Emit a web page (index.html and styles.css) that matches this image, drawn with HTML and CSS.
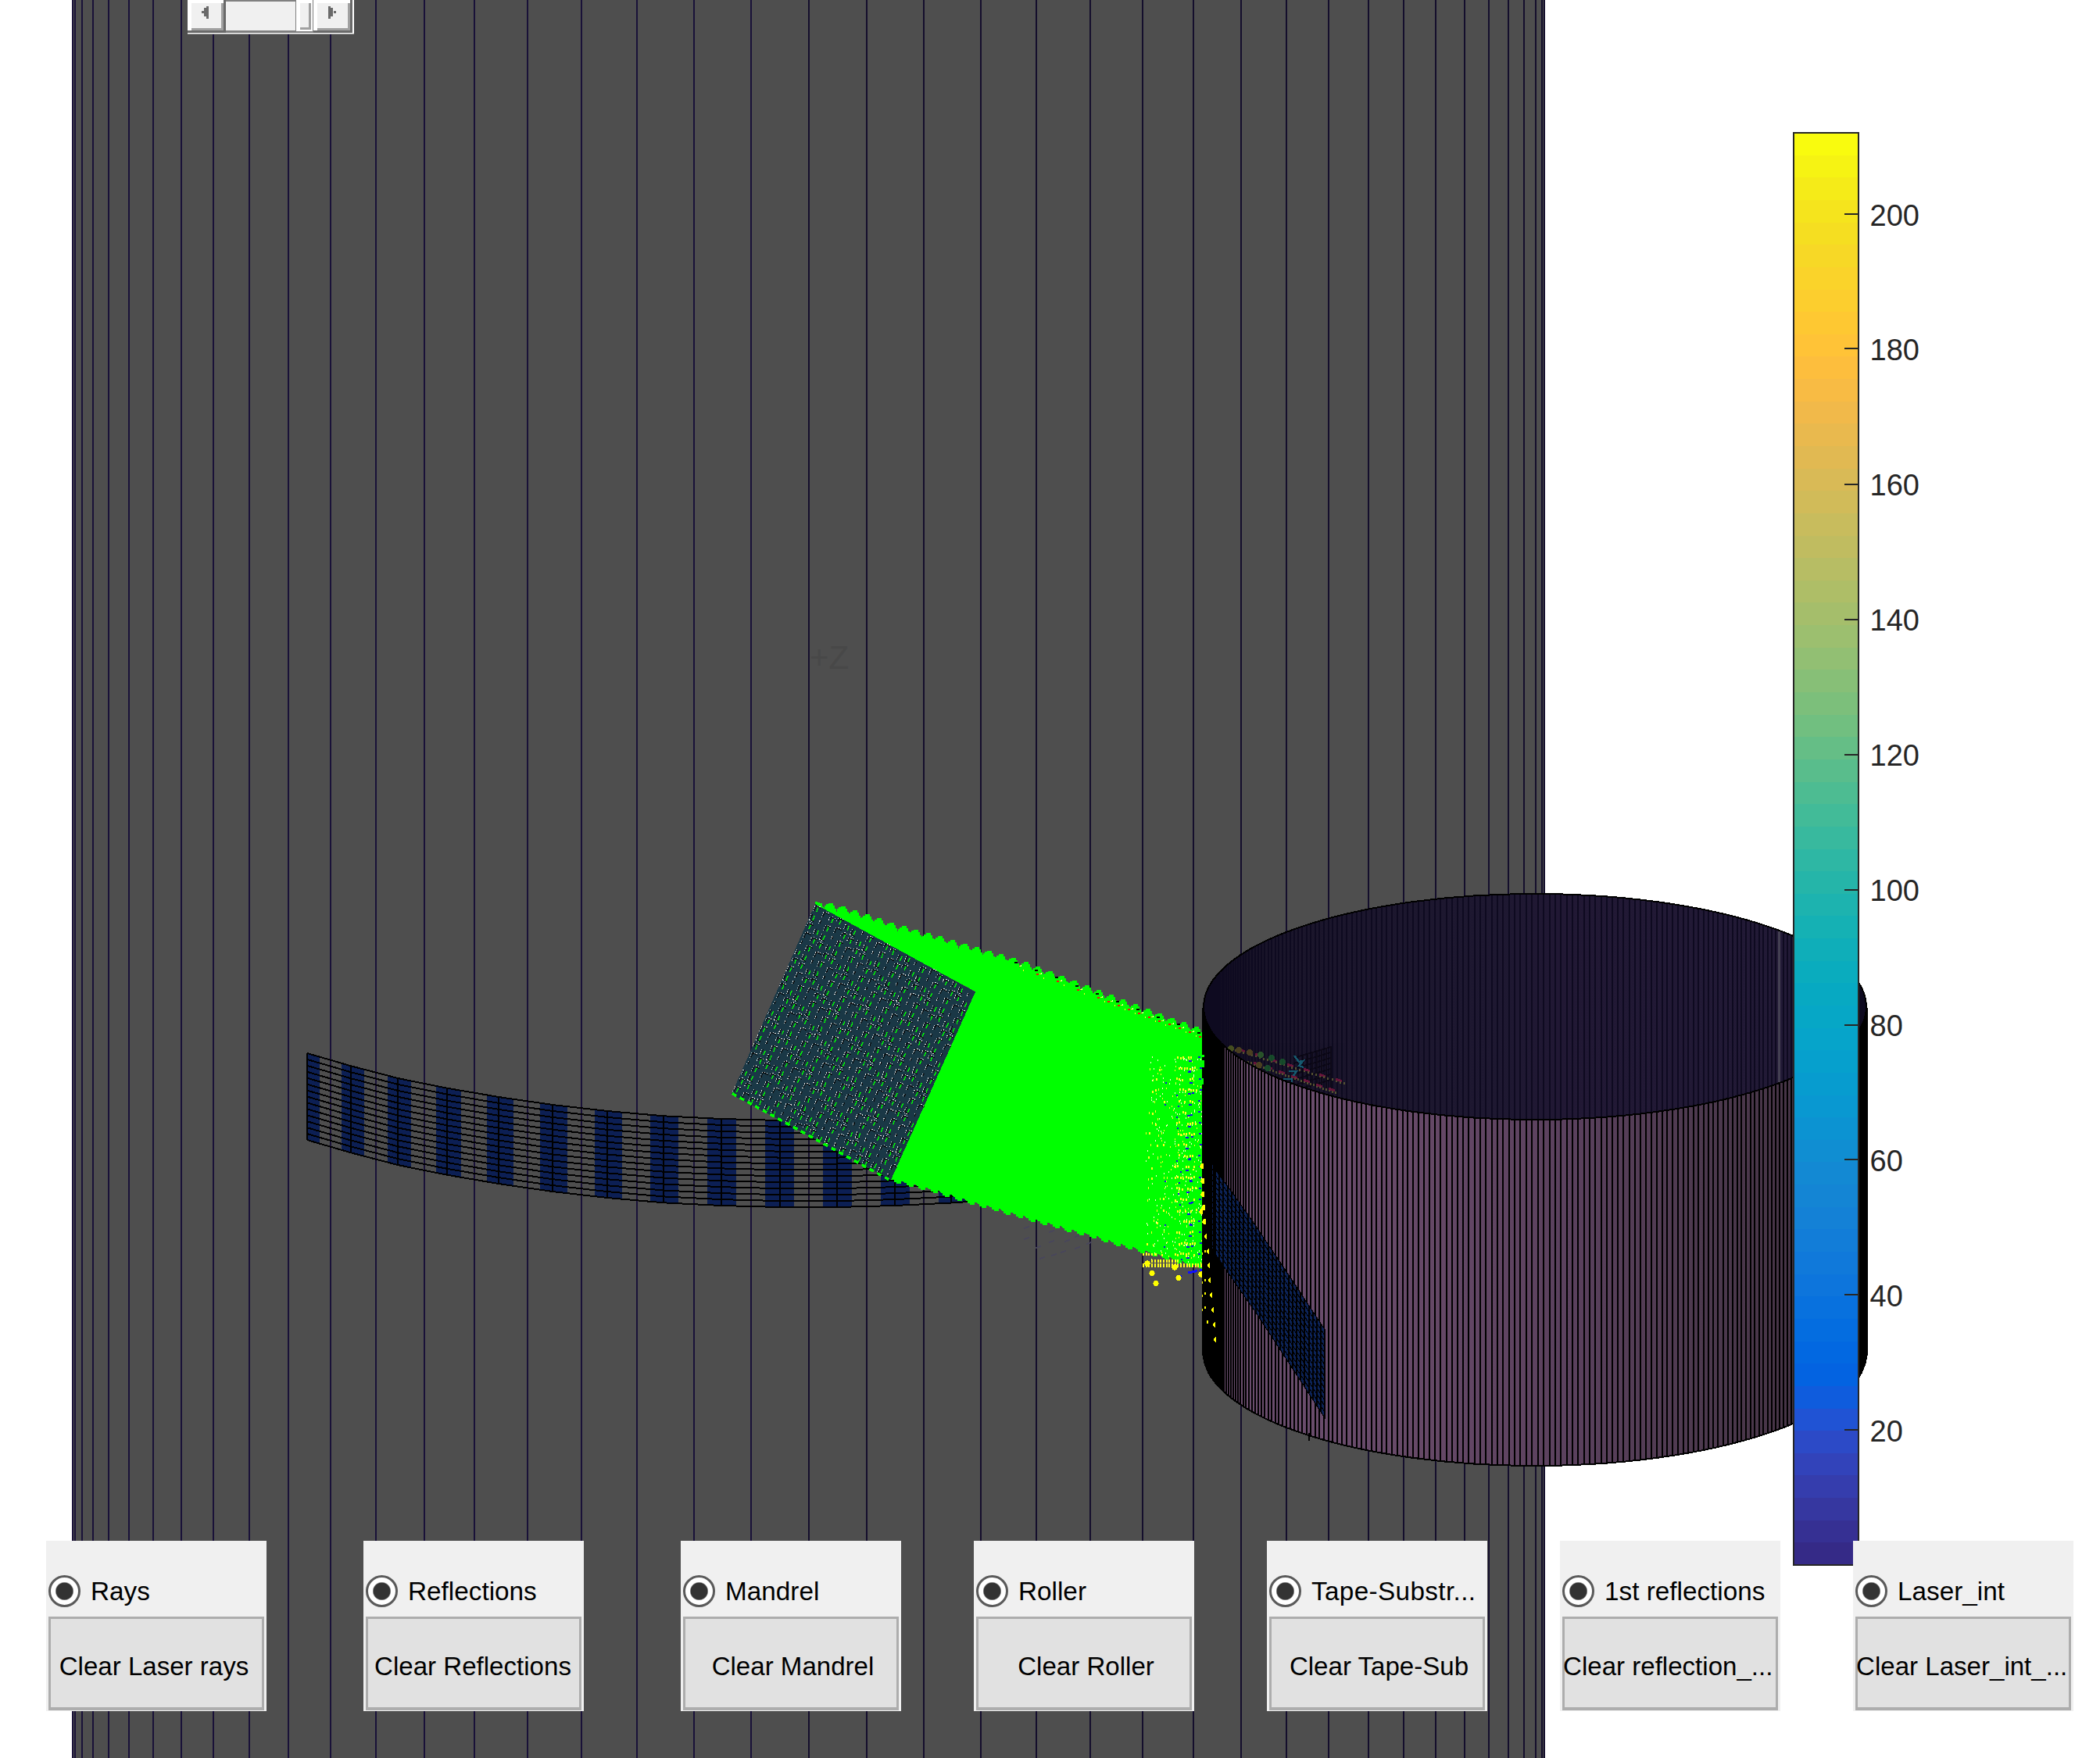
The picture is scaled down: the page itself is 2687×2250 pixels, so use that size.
FILE: index.html
```html
<!DOCTYPE html>
<html lang="en">
<head>
<meta charset="utf-8">
<title>Laser optics</title>
<link rel="stylesheet" href="styles.css">
</head>
<body>
<main class="figure">
  <svg class="scene" width="2687" height="2250" viewBox="0 0 2687 2250" shape-rendering="crispEdges">
    <defs>
      <linearGradient id="shell" gradientUnits="userSpaceOnUse" x1="1563" y1="0" x2="2295" y2="0">
        <stop offset="0" stop-color="#6b4e6e"/><stop offset="0.3" stop-color="#684a69"/>
        <stop offset="0.6" stop-color="#5b415e"/><stop offset="0.85" stop-color="#4d394e"/>
        <stop offset="1" stop-color="#463446"/>
      </linearGradient>
      <linearGradient id="bore" gradientUnits="userSpaceOnUse" x1="1539" y1="0" x2="2295" y2="0">
        <stop offset="0" stop-color="#100c20"/><stop offset="0.12" stop-color="#1a152a"/>
        <stop offset="0.5" stop-color="#1e1831"/><stop offset="0.6" stop-color="#211834"/>
        <stop offset="1" stop-color="#221a36"/>
      </linearGradient>
      <clipPath id="boreClip"><ellipse cx="1964" cy="1288.5" rx="424.7" ry="144.5"/></clipPath>
    </defs>
    <rect class="mandrel" x="92" y="0" width="1885" height="2250"/>
    <g id="mandrelLines"></g>
    <text class="axis-mark" x="1036" y="856">+Z</text>
    <g id="substrate"></g>
    <g id="rays"></g>
    <g id="source"></g>
    <g id="hits"></g>
    <path d="M1539.3 1288.5V1731.5A424.7 144.5 0 0 0 2388.7 1731.5V1288.5Z" fill="url(#shell)"/>
    <g id="shellLines"></g>
    <path d="M1540 1731.5A424 144.5 0 0 0 2388 1731.5" class="rim"/>
    <ellipse cx="1964" cy="1288.5" rx="424" ry="144.5" fill="url(#bore)"/>
    <g id="boreLines" clip-path="url(#boreClip)"></g>
    <g id="ghost" clip-path="url(#boreClip)" opacity="0.6"></g>
    <ellipse cx="1964" cy="1288.5" rx="424" ry="144.5" class="rim"/>
    <path d="M1675 1834V1844" class="rim"/>
    <g id="tape"></g>
    <g id="rollerHits"></g>
    <g id="colorbar"></g>
    <g class="colorbar-frame">
      <path d="M2295 170h83v1833h-83z"/>
      <path d="M2360 274h18M2360 446h18M2360 620h18M2360 793h18M2360 966h18M2360 1139h18M2360 1312h18M2360 1484h18M2360 1657h18M2360 1830h18"/>
    </g>
    <g class="ticks">
      <text x="2392.500" y="288.600">200</text><text x="2392.500" y="460.600">180</text>
      <text x="2392.500" y="633.600">160</text><text x="2392.500" y="806.600">140</text>
      <text x="2392.500" y="979.600">120</text><text x="2392.500" y="1152.600">100</text>
      <text x="2392.500" y="1325.600">80</text><text x="2392.500" y="1498.600">60</text>
      <text x="2392.500" y="1671.600">40</text><text x="2392.500" y="1844.600">20</text>
    </g>
  </svg>

  <div class="slider">
    <div class="step"><svg width="9" height="16" viewBox="0 0 9 16"><path d="M6 0h3v16H6zM3 2h3v11H3zM0 6h3v3H0z"/></svg></div>
    <div class="track"><div class="thumb"></div></div>
    <div class="step step-next"><svg width="12" height="16" viewBox="0 0 12 16"><path d="M0 0h3v16H0zM3 2h3v11H3zM7 6h3v3H7z"/></svg></div>
  </div>

  <div class="controls">
    <section class="panel"><label class="option"><span class="radio"></span>Rays</label><button class="clear nudge-l">Clear Laser rays</button></section>
    <section class="panel"><label class="option"><span class="radio"></span>Reflections</label><button class="clear nudge-s">Clear Reflections</button></section>
    <section class="panel"><label class="option"><span class="radio"></span>Mandrel</label><button class="clear nudge-r">Clear Mandrel</button></section>
    <section class="panel"><label class="option"><span class="radio"></span>Roller</label><button class="clear nudge-r">Clear Roller</button></section>
    <section class="panel"><label class="option"><span class="radio"></span><span class="wide">Tape-Substr...</span></label><button class="clear nudge-r">Clear Tape-Sub</button></section>
    <section class="panel"><label class="option"><span class="radio"></span>1st reflections</label><button class="clear start">Clear reflection_...</button></section>
    <section class="panel"><label class="option"><span class="radio"></span>Laser_int</label><button class="clear start">Clear Laser_int_...</button></section>
  </div>
</main>
<script src="scene.js"></script>
</body>
</html>
```

FILE: styles.css
```css
* { box-sizing: border-box; }
body {
  margin: 0;
  background: #fff;
  font-family: "Liberation Sans", Arial, sans-serif;
}
.figure {
  display: grid;
  width: 2687px;
  height: 2250px;
  overflow: hidden;
}
.scene, .slider, .controls { grid-area: 1 / 1; }
.scene { display: block; }
.mandrel { fill: #4e4e4e; }
.rim { fill: none; stroke: #000; stroke-width: 2; }
.axis-mark { font-size: 42px; fill: #484848; }
.colorbar-frame path { fill: none; stroke: #262626; stroke-width: 2; }
.ticks text { font-size: 38px; fill: #262626; }

/* horizontal slider */
.slider {
  z-index: 1;
  display: flex;
  width: 213px;
  height: 44px;
  margin-left: 240px;
  background: #696969;
  border-bottom: 1px solid #a0a0a0;
  box-shadow: inset -2px -1px 0 #fff;
}
.step {
  width: 49px;
  height: 42px;
  background: #f0f0f0;
  border: solid #696969;
  border-width: 0 3px 3px 0;
  box-shadow: inset 5px 4px 0 #fff, inset -3px -3px 0 #a0a0a0;
  padding: 8px 0 0 18px;
}
.step svg { display: block; fill: #6a6a6a; shape-rendering: crispEdges; }
.track {
  width: 112px;
  height: 42px;
  background: #f0f0f0;
  border: solid #808080;
  border-width: 2px 0 3px;
  display: flex;
  justify-content: flex-end;
}
.thumb {
  width: 23px;
  height: 41px;
  margin-top: -2px;
  background: #f0f0f0;
  border: 1px solid #808080;
  border-width: 0 1px 1px;
  box-shadow: inset 5px 4px 0 #fff, inset -2px -2px 0 #fff, inset -5px -5px 0 #a0a0a0;
}
.step-next { width: 50px; padding-left: 19px; }

/* bottom row of toggles */
.controls {
  z-index: 1;
  display: grid;
  grid-template-columns: 406px 406px 375px 375px 375px 375px 282px;
  align-self: start;
  margin: 1972px 0 0 59px;
}
.panel {
  width: 282px;
  height: 218px;
  padding: 44px 3px 0;
  background: #f0f0f0;
}
.option {
  display: flex;
  align-items: center;
  gap: 13px;
  height: 41px;
  margin-bottom: 12px;
  font-size: 33.3px;
  line-height: 47px;
  color: #000;
  white-space: nowrap;
}
.wide { letter-spacing: 0.35px; }
.radio {
  width: 41px;
  height: 41px;
  border: 3px solid #5a5a5a;
  border-radius: 50%;
  background: radial-gradient(circle, #333 0 10.500px, #fff 12px);
}
.clear {
  display: block;
  width: 276px;
  height: 120px;
  padding: 9px 0 0;
  border: solid #adadad;
  border-width: 3px 3px 4px;
  border-radius: 0;
  background: #e1e1e1;
  font: 33.1px "Liberation Sans", Arial, sans-serif;
  color: #000;
  white-space: nowrap;
}
.nudge-l { padding-right: 6px; }
.nudge-s { padding-right: 2px; }
.nudge-r { padding-left: 5px; }
.start { text-align: left; text-indent: -2px; }
```

FILE: scene.js
```js
const NS = 'http://www.w3.org/2000/svg';
const layer = id => document.getElementById(id);
function add(id, tag, attrs) {
  const el = document.createElementNS(NS, tag);
  for (const k in attrs) el.setAttribute(k, attrs[k]);
  layer(id).appendChild(el);
}
const stroke = (id, d, color, width = 2, extra = {}) =>
  add(id, 'path', { d, fill: 'none', stroke: color, 'stroke-width': width, ...extra });
const fill = (id, d, color) => add(id, 'path', { d, fill: color });
const box = (x, y, w, h) => `M${x} ${y}h${w}v${h}h${-w}z`;
let seed = 7;
const rnd = () => (seed = (seed * 16807) % 2147483647) / 2147483647;
function interp(pts, x) {
  for (let i = 1; i < pts.length; i++) {
    if (x <= pts[i][0]) {
      const [x0, y0] = pts[i - 1], [x1, y1] = pts[i];
      return y0 + (y1 - y0) * (x - x0) / (x1 - x0);
    }
  }
  return pts[pts.length - 1][1];
}

/* mandrel generator lines */
const xs = [93, 96, 105, 119, 139, 165, 196, 232, 273, 319, 369, 423, 481, 543, 607, 675, 744, 815, 888,
  961, 1035, 1109, 1182, 1255, 1326, 1395, 1462, 1527, 1588, 1646, 1700, 1751, 1796, 1837, 1874, 1905,
  1930, 1950, 1965, 1973, 1976];
stroke('mandrelLines', xs.filter(x => x < 1000).map(x => `M${x} 0V2250`).join(''), '#191138');
stroke('mandrelLines', xs.filter(x => x > 1000).map(x => `M${x} 0V2250`).join(''), '#140e2c');

/* substrate tape */
const top0 = [[393, 1348], [449, 1364.3], [509, 1380], [572, 1392.7], [638, 1404], [707, 1414], [777, 1422],
  [849, 1428.3], [923, 1432], [998, 1434], [1071, 1434], [1145, 1432], [1217, 1428.5], [1240, 1427]];
const bands = [[393, 409], [437, 466], [496, 526], [558, 590], [623, 657], [691, 726], [761, 796], [832, 868],
  [905, 942], [979, 1016], [1053, 1090], [1127, 1164], [1201, 1238]];
for (const [a, b] of bands) {
  const m = (a + b) / 2;
  fill('substrate', `M${a} ${interp(top0, a)}L${m} ${interp(top0, m)}L${b} ${interp(top0, b)}V${interp(top0, b) + 111}L${m} ${interp(top0, m) + 111}L${a} ${interp(top0, a) + 111}Z`, '#0c1f54');
}
let tapeLines = '';
for (let j = 0; j <= 14; j++)
  tapeLines += 'M' + top0.map(([x, y]) => `${x} ${(y + j * 7.93).toFixed(1)}`).join('L');
for (const [x, y] of top0.slice(0, -1)) tapeLines += `M${x} ${y}v111`;
stroke('substrate', tapeLines, '#000');

/* faint shadow dashes below the beam */
for (const [x, y] of [[1310, 1572], [1310, 1586], [1325, 1597], [1342, 1590], [1342, 1577], [1357, 1603], [1330, 1611], [1375, 1583], [1375, 1598], [1345, 1607], [1390, 1592], [1362, 1589]])
  stroke('rays', `M${x} ${y}l7 -2`, '#48465a', 2);

/* incoming beam */
const beamTop = [[1043, 1158], [1063, 1163], [1136, 1187], [1199, 1205], [1260, 1223], [1292, 1232], [1351, 1254], [1399, 1273],
  [1464, 1298], [1524, 1320], [1538, 1327]];
const beamBottom = [[1140, 1509], [1182, 1520], [1230, 1535], [1269, 1546], [1325, 1562], [1390, 1580], [1433, 1593],
  [1481, 1606], [1520, 1618], [1538, 1621]];
let beam = 'M1043 1159V1154h3v1h3v1h3v3';
for (let x = 1055; x < 1532; x += 15.6) {
  const y = interp(beamTop, x);
  beam += `L${x} ${y + 2}V${y - 2}h2v-2h3v-1.500h6v3h2v4h2`;
}
beam += 'L1538 1327V1622';
const teeth = [];
for (let x = 1142; x < 1534; x += 15.6) teeth.push(x);
for (const x of teeth.reverse()) {
  const y = interp(beamBottom, x);
  beam += `L${x + 13} ${y + 2}h-2v3h-6v-2h-3v-3h-2`;
}
beam += 'L1140 1510L1248 1269Z';
fill('rays', beam, '#0f0');

/* ray source grid */
fill('source', 'M1043 1157L1248 1269.500L1140 1510L936 1400.500Z', '#1a3846');
let green = '', black = '', white = '';
const U = [205 / 21, 112.5 / 21], V = [-107.2 / 22, 242 / 22];
const at = (u, v) => [1043 + u * U[0] + v * V[0], 1157 + u * U[1] + v * V[1]];
const seg = (u0, v0, u1, v1, dx = 0) => {
  const a = at(u0, v0), b = at(u1, v1);
  return `M${(a[0] + dx).toFixed(1)} ${a[1].toFixed(1)}L${(b[0] + dx).toFixed(1)} ${b[1].toFixed(1)}`;
};
for (let i = 0; i < 21; i++) {
  for (let j = 0; j < 22; j++) {
    const phase = (i * 2 + j * 3) % 7;
    const u = i + (phase % 3) * 0.1, v = j + (i % 3) * 0.15;
    if (v > 21.3) continue;
    if (phase !== 2 && phase !== 5) green += seg(u + 0.5, v + 0.15, u + 0.5, v + 0.65);
    const len = phase < 4 ? 0.6 : 0.35;
    black += seg(u + 0.2, v + 0.1, u + 0.2, v + 0.1 + len);
    white += seg(u + 0.2, v + 0.1, u + 0.2, v + 0.1 + len, -1.5);
    if (phase % 2 === 0) {
      black += seg(u + 0.2, v + 0.12, u + 0.8, v + 0.12);
      white += seg(u + 0.3, v + 0.02, u + 0.8, v + 0.02);
    } else if (phase === 3) {
      black += seg(u + 0.1, v + 0.7, u + 0.7, v + 0.7);
      white += seg(u + 0.1, v + 0.8, u + 0.6, v + 0.8);
    }
  }
}
stroke('source', green, '#0f0', 1.3);
stroke('source', black, '#0a0a0a', 1);
stroke('source', white, '#e4e4e4', 1, { 'stroke-dasharray': '1.4 1.6' });
let lower = '';
for (let i = 0; i < 21; i++) lower += seg(i + 0.1, 22, i + 0.65, 22);
stroke('source', lower, '#0f0', 3.5);

/* intersection markers inside the beam */
let yellow = '', cream = '', blue = '', red = '', dark = '';
for (let k = 0; k < 19; k++) {
  const y = 1351 + k * 14;
  const right = 1503 + Math.floor(rnd() * 6);
  for (let x = right; x < 1530; x += 3.4) {
    if (rnd() < 0.72) yellow += box(Math.round(x), y + Math.round(rnd() * 2), 2, 3);
    if (rnd() < 0.3) cream += box(Math.round(x), y + 4, 1, 2);
  }
  for (let x = 1465 + rnd() * 6; x < 1493; x += 4) if (rnd() < 0.38) yellow += box(Math.round(x), y + Math.round(rnd() * 3), 1 + Math.round(rnd()), 3);
  for (let n = 0; n < 10; n++) cream += box(Math.round(1538 - Math.pow(rnd(), 1.3) * 72), Math.round(y + rnd() * 14), 1, 2);
  for (let n = 0; n < 6; n++) yellow += box(Math.round(1538 - Math.pow(rnd(), 1.4) * 60), Math.round(y + rnd() * 14), 1, 2);
  blue += box(1517 + Math.round(rnd() * 6), y + 6, 4, 2);
  if (k % 2) blue += box(1521 + Math.round(rnd() * 4), y + 5, 3, 2);
  blue += box(1533 + Math.round(rnd() * 2), y + 1, 3, 2);
  if (rnd() < 0.6) blue += box(1505 + Math.round(rnd() * 6), y + 8, 2, 2);
  if (rnd() < 0.3) blue += box(1488 + Math.round(rnd() * 4), y + 6, 2, 2);
}
for (let x = 1300; x < 1536; x += x < 1400 ? 26 : 13) {
  const y = Math.round(interp(beamTop, x));
  if (x % 2 === 0) dark += box(x - 2, y - 4, 4, 2);
  yellow += box(x + 4, y + 1, 2, 1) + box(x + 9, y + 6, 1, 2);
  cream += box(x + 6, y, 1, 2);
  if (x > 1310) red += box(x, y + 1, 3, 2);
}
/* comb under the beam */
for (let x = 1462; x < 1538; x += 3.7) {
  yellow += box(Math.round(x), 1617, 2, 5);
  if (x > 1472 && x < 1508) yellow += box(Math.round(x), 1612, 2, 4);
  if (x < 1478) yellow += box(Math.round(x), 1604, 2, 3);
}
fill('hits', dark, '#000');
fill('hits', cream, '#ffffc8');
fill('hits', yellow, '#ffff1e');
fill('hits', blue, '#1414e6');
fill('hits', red, '#f01010');
stroke('hits', 'M1520 1629l12 -2.500M1508 1633h4M1535 1625h4', '#1010ff', 3);
for (const [x, y] of [[1468, 1617], [1474, 1629.5], [1479, 1642.5], [1503, 1622], [1508, 1635.5], [1537, 1631]])
  add('hits', 'circle', { cx: x, cy: y, r: 3.6, fill: '#ff0' });

/* roller generator lines */
let shell = '', bore = '';
const RX = 424.7, RY = 144.5, STEP = Math.PI / 180;
for (let n = 0; n < 180; n++) {
  const a = (n + 0.5) * STEP, x = Math.round(1964 - RX * Math.cos(a)), dy = RY * Math.sin(a);
  shell += `M${x} ${1288.5 + dy}V${1731.5 + dy}`;
  bore += `M${x} ${1288.5 - dy}V${1288.5 + dy}`;
}
stroke('shellLines', shell, '#000');
stroke('boreLines', bore, '#0e0a20');
stroke('boreLines', 'M2276.500 1150V1420', '#444052', 3);
const curveL = [], curveR = [];
const lowerRim = x => 1731.5 + RY * Math.sqrt(Math.max(0, 1 - ((x - 1964) / RX) ** 2));
for (let x = 1563; x >= 1540; x--) curveL.push(`${x} ${lowerRim(x)}`);
for (let x = 2362; x <= 2388; x++) curveR.push(`${x} ${lowerRim(x)}`);
fill('shellLines', `M1563 1288L${curveL.join('L')}L1539 1731V1288Z`, '#000');
fill('shellLines', `M2362 1288L${curveR.join('L')}L2388 1731V1288Z`, '#000');

/* objects seen through the bore */
let mesh = '';
for (let i = 0; i <= 6; i++) mesh += `M${1667 + i * 6} ${1351 - i * 2}V${1388 + i}`;
for (let j = 0; j <= 6; j++) mesh += `M1655 ${1354 + j * 7}L1703 ${1340 + j * 7}`;
stroke('ghost', mesh, '#05030c');
for (const [x0, y0, x1, y1] of [[1575, 1341, 1722, 1386], [1596, 1358, 1710, 1398]]) {
  for (let t = 0; t <= 1.001; t += 0.035) {
    const x = Math.round(x0 + (x1 - x0) * t), y = Math.round(y0 + (y1 - y0) * t);
    fill('ghost', box(x, y, 2, 3), '#7d7c38');
    if (Math.round(t / 0.035) % 4 === 2) stroke('ghost', `M${x} ${y - 1}l8 3`, '#a01848', 3);
  }
}
for (const [x, y, c] of [[1575, 1342, '#6a7a20'], [1585, 1344, '#706020'], [1599, 1347, '#706020'], [1613, 1350, '#3a8030'], [1627, 1354, '#1a7030'], [1641, 1359, '#1a7030'], [1611, 1363, '#706020'], [1622, 1367, '#1a7030']])
  add('ghost', 'circle', { cx: x, cy: y, r: 4, fill: c });
stroke('ghost', 'M1656 1351l6 8l5 -1l-5 6l6 2M1649 1371h10l-4 6M1642 1381h11v4', '#178aa0', 2.5);

/* tape on the roller */
const tTop = [[1555, 1497], [1580, 1531], [1620, 1588], [1660, 1649], [1696, 1703]];
const tBot = [[1555, 1605], [1580, 1641.5], [1607, 1680], [1647, 1741], [1696, 1816]];
fill('tape', 'M' + tTop.map(p => p.join(' ')).join('L') + 'L' + [...tBot].reverse().map(p => p.join(' ')).join('L') + 'Z', '#0c2358');
let columns = '', rows = '';
for (let x = 1555; x <= 1697; x += 5.2) columns += `M${Math.round(x)} ${interp(tTop, x).toFixed(1)}V${interp(tBot, x).toFixed(1)}`;
for (let j = 0; j <= 15; j++) {
  rows += 'M' + [1555, 1580, 1607, 1647, 1696].map(x => `${x} ${(interp(tTop, x) + (interp(tBot, x) - interp(tTop, x)) * j / 15).toFixed(1)}`).join('L');
}
stroke('tape', columns, '#000', 2);
stroke('tape', rows, '#000', 1.2);
stroke('tape', 'M1551.500 1491V1598', '#0c1c48', 1, { 'stroke-dasharray': '5 2' });

/* reflections landing on the roller edge */
let spots = '';
for (const [x, y] of [[1540, 1563], [1542, 1582], [1545, 1601], [1546, 1619], [1547, 1638], [1549, 1657], [1551, 1676], [1553, 1695], [1554, 1714]])
  spots += `M${x + 1} ${y - 3}h1v7h-1l-2 -2v-3z`;
for (const [x, y] of [[1537, 1492], [1538, 1511], [1538, 1528], [1539, 1545], [1540, 1563], [1536, 1550]])
  spots += `M${x} ${y - 3}h3v7h-3l-2 -3z`;
for (const y of [1601, 1638, 1655, 1673]) spots += box(1541, y - 1, 2, 3) + box(1538, y + 2, 1, 3);
spots += box(1544, 1690, 2, 4);
fill('rollerHits', spots, '#ff0');
fill('rollerHits', box(1537, 1350, 4, 3) + box(1538, 1357, 3, 9) + box(1537, 1380, 3, 8), '#0f0');

/* colour scale, lowest value first */
const scale = [[53, 42, 135], [54, 48, 147], [54, 55, 160], [53, 61, 173], [50, 67, 186], [44, 74, 199], [32, 83, 212], [15, 92, 221],
  [3, 99, 225], [2, 104, 225], [4, 109, 224], [8, 113, 222], [13, 117, 220], [16, 121, 218], [18, 125, 216], [20, 129, 214],
  [20, 133, 212], [19, 137, 211], [16, 142, 210], [12, 147, 210], [9, 152, 209], [7, 156, 207], [6, 160, 205], [6, 164, 202],
  [6, 167, 198], [7, 169, 194], [10, 172, 190], [15, 174, 185], [21, 177, 180], [29, 179, 175], [37, 181, 169], [46, 183, 164],
  [56, 185, 158], [66, 187, 152], [77, 188, 146], [89, 189, 140], [101, 190, 134], [113, 191, 128], [124, 191, 123], [135, 191, 119],
  [146, 191, 115], [156, 191, 111], [165, 190, 107], [174, 190, 103], [183, 189, 100], [192, 188, 96], [200, 188, 93], [209, 187, 89],
  [217, 186, 86], [225, 185, 82], [233, 185, 78], [241, 185, 74], [248, 187, 68], [253, 190, 61], [255, 195, 55], [254, 200, 50],
  [252, 206, 46], [250, 211, 42], [247, 216, 38], [245, 222, 33], [245, 228, 29], [245, 235, 24], [246, 243, 19], [249, 251, 14]];
scale.forEach((c, i) => {
  const a = Math.round(2003 - (i + 1) * 28.64), b = Math.round(2003 - i * 28.64);
  add('colorbar', 'rect', { x: 2295, y: a, width: 83, height: b - a, fill: `rgb(${c})` });
});
```
